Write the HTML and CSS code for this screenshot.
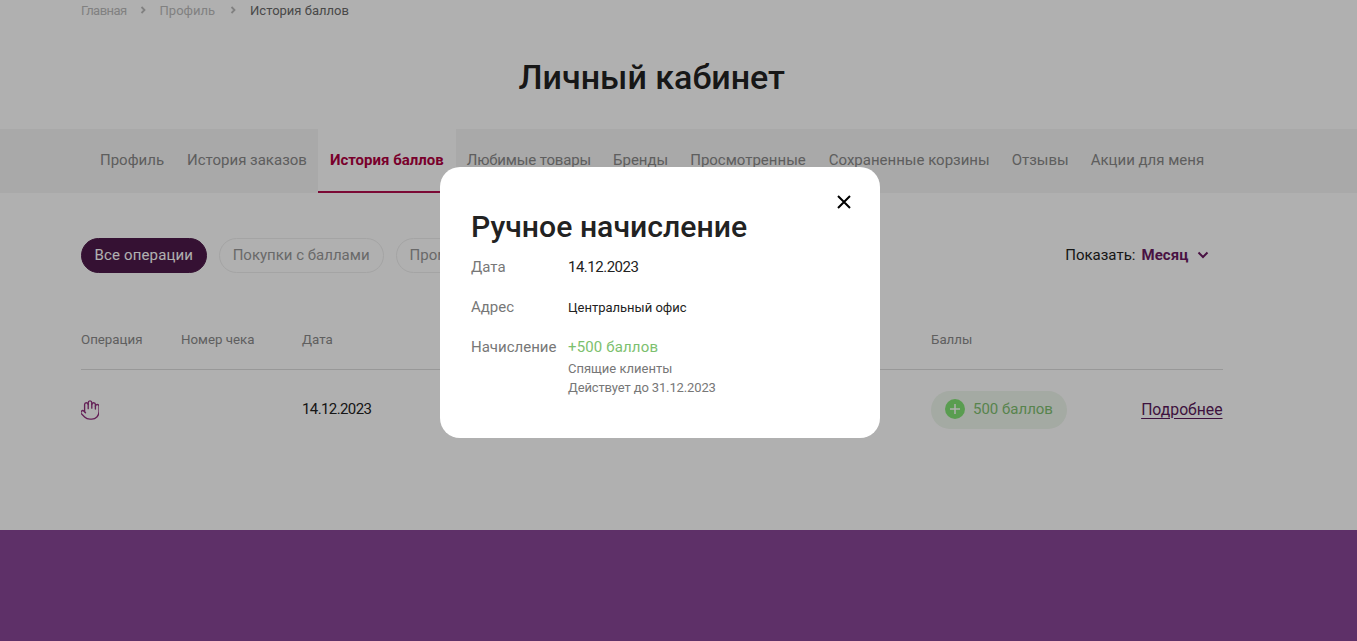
FILE: index.html
```html
<!DOCTYPE html>
<html lang="ru">
<head>
<meta charset="utf-8">
<title>Личный кабинет</title>
<link rel="stylesheet" href="styles.css">
</head>
<body>

<div class="page">
	<div class="container crumbs">
		<span class="crumb_first">Главная</span>
		<svg class="crumb_arrow" viewBox="0 0 6 8"><path d="M1.5 1l3 3-3 3"/></svg>
		<span class="crumb_mid">Профиль</span>
		<svg class="crumb_arrow" viewBox="0 0 6 8"><path d="M1.5 1l3 3-3 3"/></svg>
		<span class="current">История баллов</span>
	</div>

	<h1 class="container title">Личный кабинет</h1>

	<div class="tabs">
		<div class="container tabs_row">
			<a class="tab">Профиль</a>
			<a class="tab">История заказов</a>
			<a class="tab active">История баллов</a>
			<a class="tab favorites">Любимые товары</a>
			<a class="tab">Бренды</a>
			<a class="tab viewed">Просмотренные</a>
			<a class="tab">Сохраненные корзины</a>
			<a class="tab">Отзывы</a>
			<a class="tab">Акции для меня</a>
		</div>
	</div>

	<div class="container filters">
		<a class="chip active">Все операции</a>
		<a class="chip">Покупки с баллами</a>
		<a class="chip">Промо</a>
		<div class="period">
			<span>Показать:</span>
			<b>Месяц</b>
			<svg class="period_arrow" viewBox="0 0 12 8"><path d="M1.5 1.5L6 6l4.500-4.500"/></svg>
		</div>
	</div>

	<div class="container">
		<div class="history_row history_head">
			<span>Операция</span>
			<span>Номер чека</span>
			<span>Дата</span>
			<span>Баллы</span>
		</div>
		<div class="history_row">
			<svg class="hand" viewBox="2 1 20 22" preserveAspectRatio="none"><path d="M18 11V6a2 2 0 0 0-2-2 2 2 0 0 0-2 2"/><path d="M14 10V4a2 2 0 0 0-2-2 2 2 0 0 0-2 2v2"/><path d="M10 10.500V6a2 2 0 0 0-2-2 2 2 0 0 0-2 2v8"/><path d="M18 8a2 2 0 1 1 4 0v6a8 8 0 0 1-8 8h-2c-2.800 0-4.500-.86-5.990-2.340l-3.600-3.600a2 2 0 0 1 2.830-2.820L7 15"/></svg>
			<span></span>
			<span class="date">14.12.2023</span>
			<span class="points">
				<svg class="plus" viewBox="0 0 20 20"><circle cx="10" cy="10" r="10"/><path d="M10 5v10M5 10h10"/></svg>
				500 баллов
			</span>
			<a class="more">Подробнее</a>
		</div>
	</div>

	<div class="overlay">
		<div class="modal">
			<svg class="close" viewBox="0 0 14 14"><path d="M1 1l12 12M13 1L1 13"/></svg>
			<h2 class="modal_title">Ручное начисление</h2>
			<div class="info">
				<span class="label">Дата</span>
				<span class="date_value">14.12.2023</span>
				<span class="label">Адрес</span>
				<span class="office">Центральный офис</span>
				<span class="label">Начисление</span>
				<div>
					<div class="bonus">+500 баллов</div>
					<div class="note first">Спящие клиенты</div>
					<div class="note until">Действует до 31.12.2023</div>
				</div>
			</div>
		</div>
	</div>
</div>

<div class="footer"></div>

</body>
</html>
```

FILE: styles.css
```css
body {
	margin: 0;
	font-family: Roboto, "Noto Sans", sans-serif;
	color: #222;
	background: #fff;
}

.page {
	position: relative;
	height: 530px;
	overflow: hidden;
}

.container {
	width: 1141.500px;
	margin-left: 81px;
}

.crumbs {
	display: flex;
	align-items: center;
	height: 20px;
	font-size: 13px;
	color: #bbb;
}

.crumb_first {
	letter-spacing: -0.55px;
}

.crumb_mid {
	margin-right: 2px;
}

.crumbs .current {
	color: #6a6a6a;
}

.crumb_arrow {
	width: 6px;
	height: 8px;
	margin: 0 14px 0 13px;
	fill: none;
	stroke: #bbb;
	stroke-width: 1.800;
}

.title {
	margin-top: 34px;
	margin-bottom: 0;
	height: 75px;
	font-size: 34px;
	line-height: 46px;
	font-weight: 500;
	text-align: center;
}

.tabs {
	height: 64px;
	background: #f5f5f5;
}

.tabs_row {
	display: flex;
	height: 64px;
	padding-left: 8px;
	box-sizing: border-box;
}

.tab {
	padding: 0 11px;
	font-size: 15px;
	line-height: 62px;
	color: #888;
	border-bottom: 2px solid transparent;
}

.tab:first-child {
	padding-right: 12px;
}

.tab.active {
	padding: 0 12px;
	background: #fff;
	color: #b0003f;
	font-weight: 700;
	border-bottom-color: #b20e4d;
}

.tab.favorites {
	letter-spacing: -0.15px;
}

.tab.viewed {
	padding-right: 12px;
}

.filters {
	display: flex;
	align-items: center;
	gap: 12px;
	height: 35px;
	margin-top: 45px;
}

.chip {
	height: 33px;
	padding: 0 13px;
	border: 1px solid #eee;
	border-radius: 18px;
	font-size: 15px;
	line-height: 33px;
	color: #999;
}

.chip.active {
	padding: 0 12.500px;
	background: #4e1a4a;
	border-color: #4e1a4a;
	color: #fff;
	letter-spacing: 0.15px;
}

.period {
	display: flex;
	align-items: center;
	margin-left: auto;
	margin-right: 14px;
	margin-bottom: 2px;
	font-size: 15px;
	color: #222;
}

.period b {
	margin-left: 6px;
	letter-spacing: 0.1px;
	color: #6a1a62;
}

.period_arrow {
	width: 12px;
	height: 8px;
	margin-left: 8px;
	fill: none;
	stroke: #6a1a62;
	stroke-width: 2;
}

.history_row {
	display: grid;
	grid-template-columns: 100px 121px 629px 1fr auto;
	align-items: center;
	height: 78px;
	font-size: 15px;
}

.history_head {
	height: 34px;
	margin-top: 49px;
	padding-bottom: 13px;
	border-bottom: 1px solid #ddd;
	font-size: 13.300px;
	color: #8a8a8a;
}

.hand {
	width: 18px;
	height: 20px;
	margin-top: 2px;
	fill: none;
	stroke: #92307e;
	stroke-width: 1.500;
	stroke-linecap: round;
	stroke-linejoin: round;
}

.date {
	letter-spacing: -0.6px;
	color: #222;
}

.points {
	display: flex;
	align-items: center;
	gap: 8px;
	width: 136px;
	height: 38px;
	margin-top: 2px;
	padding: 0 0 2px 14px;
	box-sizing: border-box;
	border-radius: 19px;
	background: #eef6ec;
	color: #7fbf70;
}

.plus {
	width: 20px;
	height: 20px;
	fill: #82e474;
}

.plus path {
	fill: none;
	stroke: #fff;
	stroke-width: 1.500;
}

.more {
	font-size: 15.750px;
	color: #5a1a5a;
	text-decoration: underline;
	text-underline-offset: 3px;
}

.overlay {
	position: absolute;
	top: 0;
	left: 0;
	right: 0;
	bottom: 0;
	padding: 167px 0 0 440px;
	background: rgba(0, 0, 0, 0.31);
}

.modal {
	position: relative;
	width: 440px;
	height: 271px;
	padding: 42px 31px 0;
	box-sizing: border-box;
	border-radius: 20px;
	background: #fff;
}

.close {
	position: absolute;
	top: 28px;
	right: 29px;
	width: 14px;
	height: 14px;
	fill: none;
	stroke: #000;
	stroke-width: 2;
}

.modal_title {
	margin: 0;
	font-size: 30.200px;
	line-height: 36px;
	font-weight: 500;
}

.info {
	display: grid;
	grid-template-columns: 97px 1fr;
	row-gap: 21px;
	margin-top: 13px;
	font-size: 15px;
	line-height: 19px;
}

.label {
	color: #777;
}

.date_value {
	letter-spacing: -0.5px;
}

.office {
	font-size: 13px;
}

.bonus {
	letter-spacing: 0.15px;
	color: #7cc06e;
}

.note {
	font-size: 13px;
	line-height: 19px;
	color: #777;
}

.note.first {
	margin-top: 2px;
}

.note.until {
	letter-spacing: -0.13px;
}

.footer {
	height: 111px;
	background: #5e3068;
}
```
